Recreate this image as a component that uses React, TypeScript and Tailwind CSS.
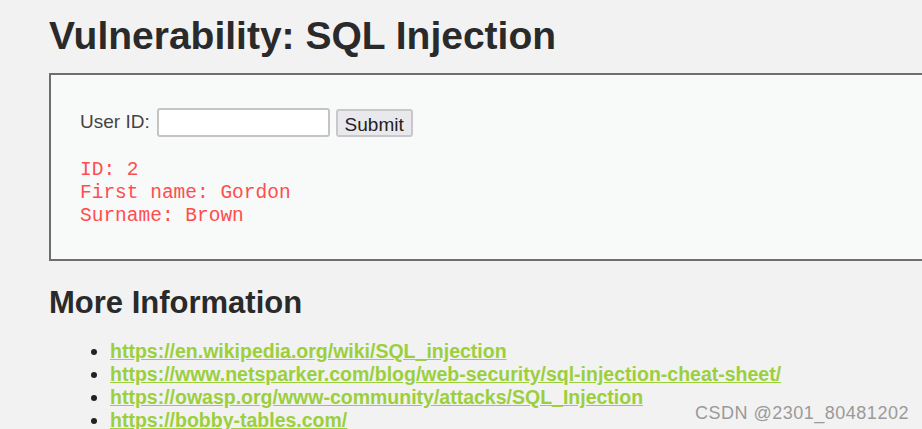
export default function App() {
  const links = [
    'https://en.wikipedia.org/wiki/SQL_injection',
    'https://www.netsparker.com/blog/web-security/sql-injection-cheat-sheet/',
    'https://owasp.org/www-community/attacks/SQL_Injection',
    'https://bobby-tables.com/',
  ];

  return (
    <div className="relative h-[429px] w-[922px] overflow-hidden bg-[#f2f2f2] font-['Liberation_Sans',Arial,sans-serif] text-[#222]">
      <div className="pl-[49px] pt-[12px]">
        <h1 className="text-[39px] font-bold leading-[48px] text-[#2a2a2a]">Vulnerability: SQL Injection</h1>

        <div className="mt-[13px] h-[188px] w-[900px] border-2 border-[#6e6e6e] bg-[#f8f9f9] pl-[29px] pt-[33px]">
          <form className="flex items-center" onSubmit={(e) => e.preventDefault()}>
            <label className="text-[19px] text-[#444]">User ID:</label>
            <input className="ml-[7px] h-[29px] w-[173px] rounded-[3px] border-2 border-[#c4c4c4] bg-white" />
            <button className="ml-[6px] h-[28px] w-[77px] rounded-[3px] border-2 border-[#c8c8cc] bg-[#e9e9ed] text-[19px] text-[#222]">
              Submit
            </button>
          </form>
          <pre className="mt-[22px] font-['Liberation_Mono','Courier_New',monospace] text-[19.5px] leading-[23px] text-[#ff4d4d]">
            {'ID: 2\nFirst name: Gordon\nSurname: Brown'}
          </pre>
        </div>

        <h2 className="mt-[24px] text-[31px] font-bold leading-[36px] text-[#2a2a2a]">More Information</h2>

        <ul className="mt-[19px] list-disc pl-[61px] text-[19.5px] font-bold leading-[23px] marker:text-[#222]">
          {links.map((l) => (
            <li key={l}>
              <a href="#" className="text-[#9bcf3c] underline">{l}</a>
            </li>
          ))}
        </ul>
      </div>

      <div className="absolute left-[695px] top-[400px] text-[18px] tracking-[0.5px] text-[#9a9a9a]">CSDN @2301_80481202</div>
    </div>
  );
}
